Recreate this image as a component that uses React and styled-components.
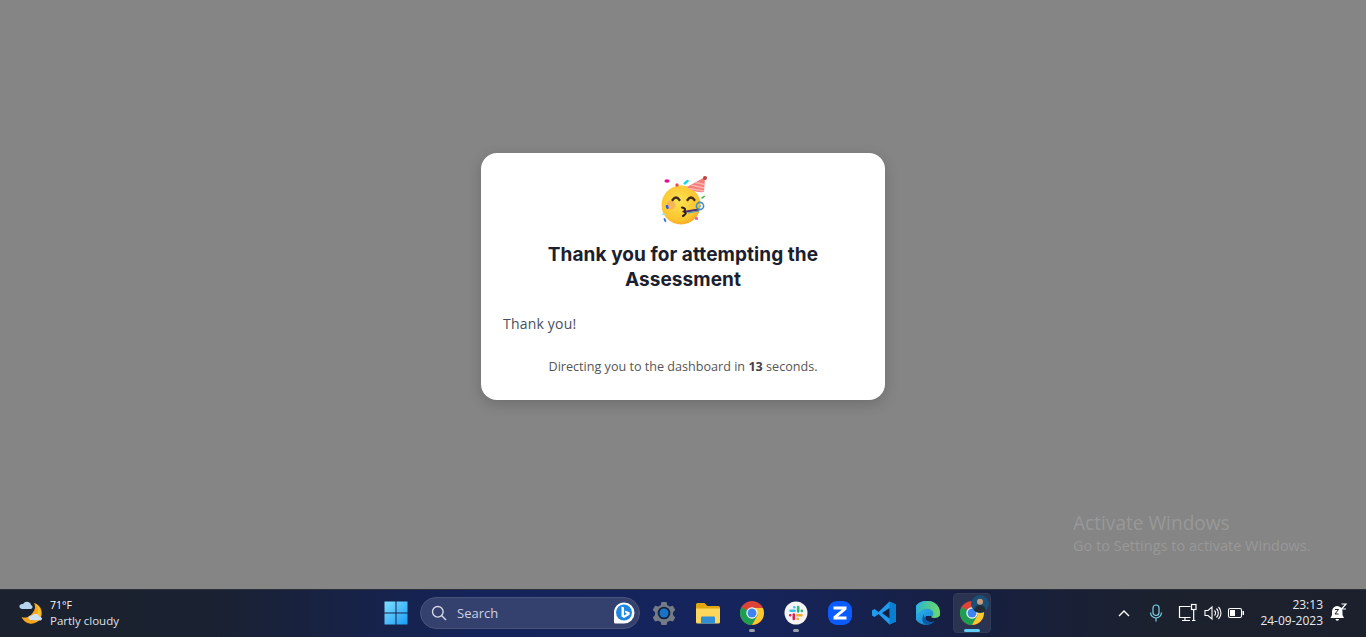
import React from "react";
import styled, { createGlobalStyle } from "styled-components";

const Global = createGlobalStyle`
  html, body { margin: 0; padding: 0; height: 100%; overflow: hidden; }
  #root { height: 100%; }
  * { box-sizing: border-box; }
`;
const Page = styled.div`
  position: relative; width: 100%; height: 637px; display: flex; flex-direction: column;
  background: #858585; font-family: "Open Sans", "Noto Sans", sans-serif;
`;
const Stage = styled.main`
  flex: 1; display: flex; justify-content: center; align-items: flex-start; padding-top: 153px;
`;
const Modal = styled.section`
  width: 404px; height: 247px; background: #fff; border-radius: 16px; padding: 23px 22px 0;
  box-shadow: 0 4px 14px rgba(0,0,0,.18); display: flex; flex-direction: column;
`;
const Party = styled.svg`
  width: 50px; height: 50px; align-self: center; display: block; flex: none;
`;
const Title = styled.h1`
  margin: 16px auto 0; width: 300px; text-align: center; font: 700 19px/25px Inter, "Open Sans", sans-serif;
  color: #1a202e; letter-spacing: 0.07px;
`;
const Body = styled.p`
  margin: 22px 0 0; font-size: 14px; line-height: 20px; color: #4a4f5c; letter-spacing: .2px;
`;
const Redirect = styled.p`
  margin: 23px 0 0; text-align: center; font-size: 12.6px; line-height: 20px; color: #555;
  b { font-weight: 700; color: #444; }
`;
const Watermark = styled.div`
  position: absolute; left: 1073px; top: 511px; color: #989898; pointer-events: none;
  font-family: "Open Sans", sans-serif;
`;
const WmTitle = styled.div`font-size: 19.1px; line-height: 25px;`;
const WmSub = styled.div`font-size: 14.5px; line-height: 20px;`;
const Taskbar = styled.footer`
  height: 48px; flex: none; display: grid; grid-template-columns: 372px auto 1fr; align-items: center;
  background: linear-gradient(90deg, #1b212e 0%, #1a2130 15%, #14235a 35%, #15245c 55%, #171f3f 72%, #1b212d 85%, #1b202c 100%);
  box-shadow: inset 0 1px 0 #2c303a;
`;
const Weather = styled.div`
  display: flex; align-items: center; gap: 6px; padding-left: 18px;
`;
const WeatherText = styled.div`
  font-size: 11.5px; line-height: 16px; color: #dfe2e8; font-family: "Open Sans", sans-serif; padding-top: 2px;
`;
const Temp = styled.div`font-size: 10.5px; color: #fff; line-height: 15px; margin-top: -1px;`;
const Center = styled.div`display: flex; align-items: center;`;
const StartCell = styled.div`
  width: 48px; height: 48px; display: flex; align-items: center; justify-content: center;
`;
const Search = styled.div`
  width: 220px; height: 32px; border-radius: 16px; background: #34406e; border: 1px solid #4a5378;
  display: flex; align-items: center; padding: 0 3px 0 10px; gap: 10px; color: #cdd2e0; font-size: 13px;
  margin-right: 2px;
`;
const SearchLabel = styled.span`flex: 1; line-height: 20px;`;
const AppCell = styled.div`
  position: relative; width: 44px; height: 48px; display: flex; align-items: center; justify-content: center;
  svg { display: block; }
`;
const ActiveCell = styled(AppCell)`
  &::before {
    content: ""; position: absolute; left: 3px; right: 3px; top: 4px; bottom: 4px; border-radius: 4px;
    background: #2a3350; border: 1px solid #323b58;
  }
  svg { position: relative; }
`;
const Dot = styled.span`
  position: absolute; left: 50%; bottom: 5px; height: 3px; border-radius: 2px; transform: translateX(-50%);
  width: ${p => (p.$active ? 16 : 6)}px; background: ${p => (p.$active ? "#60cdff" : "#9aa0ab")};
`;
const Avatar = styled.svg`
  position: absolute !important; left: 21px; top: 6px;
`;
const Tray = styled.div`
  display: flex; align-items: center; justify-content: flex-end; color: #fff; padding-right: 18px;
`;
const TrayIcon = styled.div`
  display: flex; align-items: center; justify-content: center; width: ${p => p.$w || 24}px; margin-right: ${p => p.$mr || 0}px;
`;
const Clock = styled.div`
  text-align: right; font-size: 12px; line-height: 16px; color: #e8e9ec; margin: 0 7px 0 0; font-family: "Open Sans", sans-serif;
`;

const PartyIcon = () => (
  <Party viewBox="0 0 50 50" aria-label="Partying face">
    <defs>
      <radialGradient id="face" cx=".45" cy=".4" r=".65">
        <stop offset="0" stopColor="#fde251" /><stop offset=".75" stopColor="#fcc52f" /><stop offset="1" stopColor="#f5a123" />
      </radialGradient>
    </defs>
    <circle cx="23" cy="29" r="19.500" fill="url(#face)" />
    <circle cx="13" cy="29" r="4.500" fill="#f59a6c" opacity=".55" />
    <path d="M29 11 L47 1 L46 16 Q36 17 29 11Z" fill="#f37d7d" />
    <path d="M33 9 L46 12 M37 6.500 L46.500 8.500 M31 12.500 L46 15" stroke="#fbb4ae" strokeWidth="1.500" fill="none" />
    <circle cx="47" cy="2" r="2" fill="#c4403e" />
    <ellipse cx="9" cy="5" rx="2.600" ry="1.700" fill="#ee0a98" />
    <circle cx="19" cy="9" r="1.700" fill="#ef4c3f" />
    <rect x="25" y="5" width="6" height="2.500" rx="1" fill="#16d6ee" transform="rotate(-40 28 6)" />
    <rect x="43" y="20.500" width="4" height="1.400" fill="#35b52f" transform="rotate(-35 45 21)" />
    <rect x="8" y="29" width="2.500" height="4" rx="1" fill="#2a5fe5" transform="rotate(-20 9 31)" />
    <rect x="4" y="37.500" width="4" height="1.500" fill="#9fdcf3" />
    <rect x="6" y="42" width="1.800" height="4" rx=".8" fill="#2a6fe5" transform="rotate(-25 7 44)" />
    <rect x="37" y="41" width="3" height="3" rx="1" fill="#e85fd2" />
    <path d="M14.500 24 Q18 19 21.500 24 M29.500 24 Q33 19 36.500 24" stroke="#3c2a1c" strokeWidth="2.300" fill="none" strokeLinecap="round" />
    <path d="M24 31.500 Q29 32.500 26 35.500 Q30 37 25 40" stroke="#2b2016" strokeWidth="2.100" fill="none" strokeLinecap="round" />
    <path d="M28 35.500 L41 33.500" stroke="#4a2f77" strokeWidth="2" />
    <path d="M30 37 L41 35" stroke="#4aa0d0" strokeWidth="1.100" />
    <circle cx="42" cy="30" r="3.600" fill="none" stroke="#3f8fc4" strokeWidth="1.600" />
    <circle cx="42" cy="30" r="1.200" fill="#78b9dd" />
  </Party>
);

const WeatherIcon = () => (
  <svg width="26" height="26" viewBox="0 0 26 26" aria-hidden="true">
    <path d="M16 3 A10.500 10.500 0 1 1 3.500 17 A9 9 0 0 0 14.500 13 A9 9 0 0 0 16 3Z" fill="#f5a51f" />
    <path d="M16 3 A10.500 10.500 0 0 1 20 20 L17 17 A9 9 0 0 0 16 3Z" fill="#f9c22e" />
    <path d="M4 9 Q1 8.500 1.500 5.500 Q2.500 3.500 5 4 Q7 1 10.500 2 Q13 3 13 5 Q15 5.500 14.500 7.500 Q14 9 12 9Z" fill="#b4d4ef" />
    <path d="M13 20 Q10 19.500 10.500 17 Q11.500 15 14 15.500 Q16 13 19 14 Q21 15 21 16.500 Q24 17 24 19 Q23.500 20.500 22 20.500Z" fill="#cfe2f4" />
  </svg>
);
const Win = () => (
  <svg width="24" height="24" viewBox="0 0 24 24" aria-label="Start">
    <defs><linearGradient id="w" x1="0" y1="0" x2="1" y2="1"><stop offset="0" stopColor="#7fe0ff" /><stop offset="1" stopColor="#1a9bf5" /></linearGradient></defs>
    <path d="M.5.5h11v11H.5zM12.500.5h11v11h-11zM.5 12.500h11v11H.5zM12.500 12.500h11v11h-11z" fill="url(#w)" />
  </svg>
);
const Bing = () => (
  <svg width="24" height="24" viewBox="0 0 24 24" aria-hidden="true">
    <path d="M12 1.500a10.500 10.500 0 0 1 0 21H3.500c-1 0-1.500-.6-1.500-1.500V12A10 10 0 0 1 12 1.500Z" fill="#fff" />
    <circle cx="12" cy="11.500" r="8" fill="#1e86e0" />
    <path d="M9.500 5.500l2.500 1v8l3-1.700-1.600-.8-.8-2.500 5 1.800v2.400l-5.600 3.300-2.500-1.400Z" fill="#fff" />
  </svg>
);
const Gear = () => (
  <svg width="24" height="24" viewBox="0 0 24 24" aria-label="Settings">
    <path d="M9.500 1h5l.8 3.200 2.500 1.400 3.100-.9 2.400 4.200-2.300 2.300v2.900l2.300 2.300-2.400 4.200-3.100-.9-2.500 1.400-.8 3.200h-5l-.8-3.200-2.500-1.400-3.100.9-2.400-4.200 2.300-2.300v-2.900l-2.300-2.300 2.400-4.200 3.100.9 2.500-1.400Z" fill="#737b86" />
    <circle cx="12" cy="12" r="6.300" fill="#13233f" />
    <circle cx="12" cy="12" r="4.500" fill="#1873c9" />
  </svg>
);
const Folder = () => (
  <svg width="26" height="24" viewBox="0 0 26 24" aria-label="File Explorer">
    <path d="M1 3.500a1.500 1.500 0 0 1 1.500-1.500h7l3 3h11a1.500 1.500 0 0 1 1.500 1.500V8H1Z" fill="#e2a60f" />
    <path d="M1 7.500h24v13.500a1.500 1.500 0 0 1-1.500 1.500h-21A1.500 1.500 0 0 1 1 21Z" fill="#fcd75b" />
    <path d="M7 15.500h12a1 1 0 0 1 1 1v6H6v-6a1 1 0 0 1 1-1Z" fill="#2f8ed6" />
  </svg>
);
const Chrome = () => (
  <svg width="24" height="24" viewBox="0 0 24 24" aria-label="Chrome">
    <circle cx="12" cy="12" r="12" fill="#dd4437" />
    <path d="M12 12 L1.600 6 A12 12 0 0 0 12 24 L18 13.500Z" fill="#1e9e52" />
    <path d="M12 7h10.900A12 12 0 0 1 12 24l6-10.500Z" fill="#fbc82e" />
    <circle cx="12" cy="12" r="5.700" fill="#fff" />
    <circle cx="12" cy="12" r="4.500" fill="#3f84ee" />
  </svg>
);
const Slack = () => (
  <svg width="24" height="24" viewBox="0 0 24 24" aria-label="Slack">
    <circle cx="12" cy="12" r="11.500" fill="#f4f4f4" />
    <g strokeWidth="2.600" strokeLinecap="round" fill="none">
      <path d="M6.500 9.800h4.200M10.300 6.200v.1" stroke="#36c5f0" />
      <path d="M14.200 6v4.500M17.800 9.800v.1" stroke="#2eb67d" />
      <path d="M13.300 14.200h4.200M13.700 17.800v.1" stroke="#ecb22e" />
      <path d="M9.800 13.500V18M6.200 14.200v.1" stroke="#e01e5a" />
    </g>
  </svg>
);
const Zoom = () => (
  <svg width="24" height="24" viewBox="0 0 24 24" aria-label="Zoom">
    <rect width="24" height="24" rx="9" fill="#0b5cff" />
    <path d="M5.500 5.500h13v3L10 15.500h8.500v3h-13v-3L14 8.500H5.500Z" fill="#fff" />
  </svg>
);
const VS = () => (
  <svg width="24" height="24" viewBox="0 0 24 24" aria-label="VS Code">
    <path d="M17.500.5 24 3.500v17l-6.500 3-11-10.500-4 3L0 14.500V9.500L2.500 8l4 3Z" fill="#1f9cf0" />
    <path d="M17.500.500 24 3.500v17l-6.500 3Z" fill="#0a7fd1" />
    <path d="M17.500 7 10 12l7.500 5.500Z" fill="#13233f" />
  </svg>
);
const Edge = () => (
  <svg width="24" height="24" viewBox="0 0 24 24" aria-label="Edge">
    <defs>
      <linearGradient id="e1" x1="0" y1="0" x2="1" y2="1"><stop offset="0" stopColor="#35c1f1" /><stop offset="1" stopColor="#1178c8" /></linearGradient>
      <linearGradient id="e2" x1="0" y1="0" x2="1" y2="0"><stop offset="0" stopColor="#2fb7c8" /><stop offset="1" stopColor="#6fd86a" /></linearGradient>
    </defs>
    <path d="M12 0a12 12 0 0 1 12 12c0 1-.1 2-.3 3H10c-2 3 1 6 5 6 1.500 0 3-.5 3.500-1A12 12 0 1 1 12 0Z" fill="url(#e1)" />
    <path d="M12 0a12 12 0 0 1 12 13c0 3-3 4-6 4-2 0-3-1-3-1 2-1 3-3 2-5-1-3-5-4-8-3C5 9 2.500 12 1 13 0 6 5 0 12 0Z" fill="url(#e2)" />
    <path d="M8 13.500c0 4 3 7.500 7 7.500 1.500 0 3-.5 3.500-1-2 3-5 4-8 3.500C5 23 6 15 8 13.500Z" fill="#0c59a4" />
  </svg>
);
const Mic = () => (
  <svg width="16" height="20" viewBox="0 0 16 20" fill="none" stroke="#7dd3ea" strokeWidth="1.200" aria-label="Microphone">
    <rect x="5" y="2" width="6" height="10.500" rx="3" />
    <path d="M2.500 9.500a5.500 5.500 0 0 0 11 0M8 15v3.500" />
  </svg>
);
const Net = () => (
  <svg width="20" height="20" viewBox="0 0 20 20" fill="none" stroke="#fff" strokeWidth="1.200" aria-label="Network">
    <path d="M12.500 3.500H1.500v11h11M4 17.500h8M7 14.500v3" />
    <rect x="13.500" y="1.500" width="4.500" height="5" />
    <path d="M15.700 6.500v11M14 17.500h3.500" />
  </svg>
);
const Volume = () => (
  <svg width="18" height="18" viewBox="0 0 18 18" fill="none" stroke="#fff" strokeWidth="1.100" aria-label="Volume">
    <path d="M1 6.500h3l4-3.500v12l-4-3.500H1Z" />
    <path d="M10.500 6.500a3.500 3.500 0 0 1 0 5M12.500 4.500a6.500 6.500 0 0 1 0 9M14.500 3a8.500 8.500 0 0 1 0 12" />
  </svg>
);
const Battery = () => (
  <svg width="18" height="14" viewBox="0 0 18 14" aria-label="Battery">
    <rect x="1.500" y="2.500" width="13" height="9" rx="1.500" fill="none" stroke="#fff" strokeWidth="1.100" />
    <rect x="3" y="4" width="5" height="6" fill="#fff" />
    <rect x="15.500" y="5" width="1.500" height="4" fill="#fff" />
  </svg>
);
const Bell = () => (
  <svg width="18" height="20" viewBox="0 0 18 20" aria-label="Notifications">
    <path d="M7 3a5.500 5.500 0 0 1 5.500 5.500v3.500l1.500 3H0.500L2 12V8.500A5.500 5.500 0 0 1 7 3Z" fill="#fff" />
    <path d="M5.500 16h3.500a1.700 1.700 0 0 1-3.500 0Z" fill="#fff" />
    <path d="M5 6.500h3.500L5 11h3.500" stroke="#1b202c" strokeWidth="1" fill="none" />
    <path d="M11.500 1h4.500l-4.500 5h4.500" stroke="#fff" strokeWidth="1.200" fill="none" />
  </svg>
);

const apps = [
  ["settings", Gear], ["files", Folder], ["chrome", Chrome, true], ["slack", Slack, true],
  ["zoom", Zoom], ["code", VS], ["edge", Edge],
];

export default function App() {
  return (
    <Page>
      <Global />
      <Stage>
        <Modal>
          <PartyIcon />
          <Title>Thank you for attempting the Assessment</Title>
          <Body>Thank you!</Body>
          <Redirect>Directing you to the dashboard in <b>13</b> seconds.</Redirect>
        </Modal>
      </Stage>
      <Watermark>
        <WmTitle>Activate Windows</WmTitle>
        <WmSub>Go to Settings to activate Windows.</WmSub>
      </Watermark>
      <Taskbar>
        <Weather>
          <WeatherIcon />
          <WeatherText><Temp>71°F</Temp>Partly cloudy</WeatherText>
        </Weather>
        <Center>
          <StartCell><Win /></StartCell>
          <Search>
            <svg width="16" height="16" viewBox="0 0 16 16" fill="none" stroke="#d6d9e4" strokeWidth="1.400" aria-hidden="true">
              <circle cx="6.800" cy="6.800" r="5.300" /><path d="M10.800 10.800 15 15" />
            </svg>
            <SearchLabel>Search</SearchLabel>
            <Bing />
          </Search>
          {apps.map(([k, I, dot]) => (
            <AppCell key={k}><I />{dot && <Dot />}</AppCell>
          ))}
          <ActiveCell>
            <Chrome />
            <Avatar width="18" height="18" viewBox="0 0 16 16" aria-hidden="true">
              <circle cx="8" cy="8" r="8" fill="#1a4f78" />
              <circle cx="8" cy="6" r="2.700" fill="#c79a7a" />
              <path d="M3 14c.5-4 2.500-5 5-5s4.500 1 5 5a8 8 0 0 1-10 0Z" fill="#222a33" />
            </Avatar>
            <Dot $active />
          </ActiveCell>
        </Center>
        <Tray>
          <TrayIcon $w={18} $mr={15}>
            <svg width="12" height="8" viewBox="0 0 12 8" fill="none" stroke="#fff" strokeWidth="1.400" aria-label="Show hidden icons"><path d="M1 7l5-5 5 5" /></svg>
          </TrayIcon>
          <TrayIcon $w={16} $mr={14}><Mic /></TrayIcon>
          <TrayIcon $w={20} $mr={6}><Net /></TrayIcon>
          <TrayIcon $w={18} $mr={5}><Volume /></TrayIcon>
          <TrayIcon $w={18} $mr={15}><Battery /></TrayIcon>
          <Clock>23:13<br />24-09-2023</Clock>
          <TrayIcon $w={18}><Bell /></TrayIcon>
        </Tray>
      </Taskbar>
    </Page>
  );
}
